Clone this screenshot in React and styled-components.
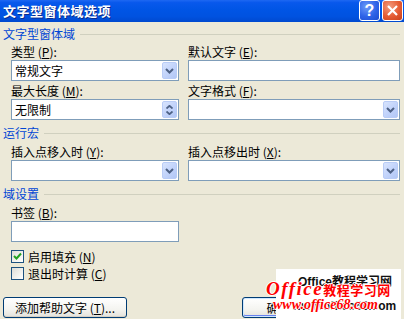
import React from "react";
import styled, { createGlobalStyle } from "styled-components";

const GlobalStyle = createGlobalStyle`
  html, body { margin: 0; padding: 0; background: #ECE9D8; }
  * { box-sizing: border-box; }
`;

const Window = styled.div`
  position: relative;
  width: 404px;
  height: 319px;
  overflow: hidden;
  background: #ECE9D8;
  font-family: "Noto Sans CJK SC", "Liberation Sans", sans-serif;
  font-size: 12px;
  color: #000;
`;

const TitleBar = styled.div`
  display: flex;
  align-items: center;
  height: 22px;
  padding: 0 1px 0 3px;
  background: linear-gradient(#1E68F2 0%, #0858EC 12%, #0055E5 45%, #0052E0 75%, #0049CF 100%);
`;

const TitleText = styled.div`
  flex: 1;
  color: #fff;
  font-size: 13px;
  font-weight: 700;
  letter-spacing: 0.5px;
  line-height: 16px;
  text-shadow: 1px 1px 0 #0A2C8C;
`;

const TitleButton = styled.div`
  display: flex;
  align-items: center;
  justify-content: center;
  width: 21px;
  height: 21px;
  margin-top: -1px;
  margin-left: ${(p) => (p.$gap ? "2px" : "0")};
  border: 1px solid #fff;
  border-radius: 3px;
  background: ${(p) =>
    p.$variant === "close"
      ? "radial-gradient(circle at 35% 30%, #F39B7E 0%, #E55B33 55%, #C8401A 100%)"
      : "radial-gradient(circle at 35% 30%, #6E9BF8 0%, #2E63E8 55%, #1C4CD0 100%)"};
`;

const HelpGlyph = styled.span`
  color: #fff;
  font-family: "Liberation Sans", sans-serif;
  font-weight: 700;
  font-size: 16px;
  line-height: 16px;
`;

const Body = styled.div`
  padding: 5px 4px 0 2px;
`;

const SectionHeading = styled.div`
  display: flex;
  align-items: center;
  gap: 5px;
  height: 14px;
  line-height: 14px;
  margin-top: ${(p) => p.$top || 0}px;
  padding-left: 1px;
  color: #0046D5;
  &::after {
    content: "";
    flex: 1;
    height: 1px;
    margin-top: 1px;
    background: #D0D0BF;
  }
`;

const FieldGrid = styled.div`
  display: grid;
  grid-template-columns: 168px 212px;
  column-gap: 9px;
  row-gap: 3px;
  padding-left: 9px;
  margin-top: ${(p) => p.$top || 0}px;
`;

const Field = styled.div`
  display: flex;
  flex-direction: column;
  gap: 1px;
`;

const Label = styled.div`
  height: 14px;
  line-height: 14px;
  white-space: nowrap;
`;

const Box = styled.div`
  display: flex;
  align-items: center;
  height: 21px;
  border: 1px solid #7F9DB9;
  background: #fff;
`;

const BoxText = styled.div`
  flex: 1;
  padding-left: 3px;
  line-height: 19px;
  white-space: nowrap;
`;

const DropButton = styled.div`
  display: flex;
  flex-direction: column;
  align-items: center;
  justify-content: center;
  gap: 2px;
  width: 15px;
  height: 17px;
  margin: 0 1px 0 0;
  border-radius: 2px;
  border: 1px solid #B9CCF6;
  background: linear-gradient(135deg, #D8E4FD 0%, #C3D4FB 50%, #B2C7F5 100%);
`;

const BookmarkArea = styled.div`
  padding-left: 9px;
  width: 177px;
  margin-top: 5px;
`;

const CheckList = styled.div`
  display: flex;
  flex-direction: column;
  gap: 4px;
  padding-left: 9px;
  margin-top: 8px;
`;

const CheckRow = styled.div`
  display: flex;
  align-items: center;
  gap: 4px;
  height: 13px;
  line-height: 13px;
`;

const CheckBox = styled.div`
  display: flex;
  align-items: center;
  justify-content: center;
  width: 13px;
  height: 13px;
  border: 1px solid #1C5180;
  background: linear-gradient(135deg, #DCDCD7 0%, #F2F2EF 60%, #FFFFFF 100%);
`;

const ButtonRow = styled.div`
  display: flex;
  align-items: center;
  margin-top: 17px;
  padding-left: 1px;
`;

const PushButton = styled.div`
  display: flex;
  align-items: center;
  justify-content: center;
  width: ${(p) => p.$w}px;
  height: 21px;
  margin-left: ${(p) => p.$ml || 0}px;
  border: 1px solid #003C74;
  border-radius: 3px;
  white-space: nowrap;
  background: linear-gradient(#FFFFFF 0%, #F4F4F0 60%, #E3E2DA 100%);
  box-shadow: ${(p) =>
    p.$default
      ? "inset 0 0 0 1px #CEE7FF, inset 0 -1px 0 1px #6982EE"
      : "inset 0 -1px 0 #D6D0C5"};
`;

const Watermark = styled.div`
  position: absolute;
  left: 276px;
  top: 269px;
  width: 125px;
  height: 50px;
  background: #fff;
`;

const WmBlack = styled.div`
  position: absolute;
  left: ${(p) => p.$x}px;
  top: ${(p) => p.$y}px;
  font-family: "Liberation Sans", "Noto Sans CJK SC", sans-serif;
  font-weight: 700;
  font-size: ${(p) => p.$size}px;
  line-height: 1;
  color: #111;
  white-space: nowrap;
`;

const WmRed = styled.div`
  position: absolute;
  left: ${(p) => p.$x}px;
  top: ${(p) => p.$y}px;
  display: flex;
  align-items: baseline;
  white-space: nowrap;
  color: #FF0000;
  line-height: 1;
  text-shadow: 1px 0 0 #fff, -1px 0 0 #fff, 0 1px 0 #fff, 0 -1px 0 #fff;
`;

const WmSerif = styled.span`
  font-family: "Liberation Serif", serif;
  font-style: italic;
  font-weight: 700;
  font-size: ${(p) => p.$size}px;
  letter-spacing: ${(p) => p.$ls || 0}px;
`;

const WmCjk = styled.span`
  font-family: "Noto Sans CJK SC", sans-serif;
  font-weight: 700;
  font-size: 13px;
  letter-spacing: 0.5px;
`;

const Chevron = ({ up }) => (
  <svg width="7" height="4" viewBox="0 0 7 4">
    <path
      d={up ? "M0.5 3.5 L3.5 0.8 L6.5 3.5" : "M0.5 0.5 L3.5 3.2 L6.5 0.5"}
      fill="none"
      stroke="#4D6185"
      strokeWidth="1.8"
    />
  </svg>
);

const BigChevron = () => (
  <svg width="9" height="6" viewBox="0 0 9 6">
    <path d="M1 1 L4.5 4.5 L8 1" fill="none" stroke="#4D6185" strokeWidth="2" />
  </svg>
);

const Mn = ({ c }) => (
  <>
    (<u>{c}</u>)
  </>
);

const Combo = ({ text, spin }) => (
  <Box>
    <BoxText>{text}</BoxText>
    <DropButton>
      {spin ? (
        <>
          <Chevron up />
          <Chevron />
        </>
      ) : (
        <BigChevron />
      )}
    </DropButton>
  </Box>
);

export default function App() {
  return (
    <>
      <GlobalStyle />
      <Window>
        <TitleBar>
          <TitleText>文字型窗体域选项</TitleText>
          <TitleButton $variant="help">
            <HelpGlyph>?</HelpGlyph>
          </TitleButton>
          <TitleButton $variant="close" $gap>
            <svg width="11" height="11" viewBox="0 0 11 11">
              <path d="M1 1 L10 10 M10 1 L1 10" stroke="#fff" strokeWidth="2.2" />
            </svg>
          </TitleButton>
        </TitleBar>
        <Body>
          <SectionHeading>文字型窗体域</SectionHeading>
          <FieldGrid $top={4}>
            <Field>
              <Label>
                类型 <Mn c="P" />:
              </Label>
              <Combo text="常规文字" />
            </Field>
            <Field>
              <Label>
                默认文字 <Mn c="E" />:
              </Label>
              <Box />
            </Field>
            <Field>
              <Label>
                最大长度 <Mn c="M" />:
              </Label>
              <Combo text="无限制" spin />
            </Field>
            <Field>
              <Label>
                文字格式 <Mn c="F" />:
              </Label>
              <Combo text="" />
            </Field>
          </FieldGrid>

          <SectionHeading $top={6}>运行宏</SectionHeading>
          <FieldGrid $top={5}>
            <Field>
              <Label>
                插入点移入时 <Mn c="Y" />:
              </Label>
              <Combo text="" />
            </Field>
            <Field>
              <Label>
                插入点移出时 <Mn c="X" />:
              </Label>
              <Combo text="" />
            </Field>
          </FieldGrid>

          <SectionHeading $top={6}>域设置</SectionHeading>
          <BookmarkArea>
            <Field>
              <Label>
                书签 <Mn c="B" />:
              </Label>
              <Box />
            </Field>
          </BookmarkArea>
          <CheckList>
            <CheckRow>
              <CheckBox>
                <svg width="9" height="9" viewBox="0 0 9 9">
                  <path d="M1 4 L3.5 6.5 L8 1.5" fill="none" stroke="#21A121" strokeWidth="2" />
                </svg>
              </CheckBox>
              <span>
                启用填充 <Mn c="N" />
              </span>
            </CheckRow>
            <CheckRow>
              <CheckBox />
              <span>
                退出时计算 <Mn c="C" />
              </span>
            </CheckRow>
          </CheckList>
          <ButtonRow>
            <PushButton $w={124}>
              添加帮助文字 <Mn c="T" />...
            </PushButton>
            <PushButton $w={73} $ml={115} $default>
              确定
            </PushButton>
            <PushButton $w={73} $ml={10}>
              取消
            </PushButton>
          </ButtonRow>
        </Body>
        <Watermark />
        <WmBlack $x={298} $y={276} $size={12}>
          Office教程学习网
        </WmBlack>
        <WmBlack $x={292} $y={300} $size={12}>
          www.office68.com
        </WmBlack>
        <WmRed $x={266} $y={279}>
          <WmSerif $size={19} $ls={1.5}>Office</WmSerif>
          <WmCjk>教程学习网</WmCjk>
        </WmRed>
        <WmRed $x={273} $y={298}>
          <WmSerif $size={14}>www.office68.com</WmSerif>
        </WmRed>
      </Window>
    </>
  );
}
